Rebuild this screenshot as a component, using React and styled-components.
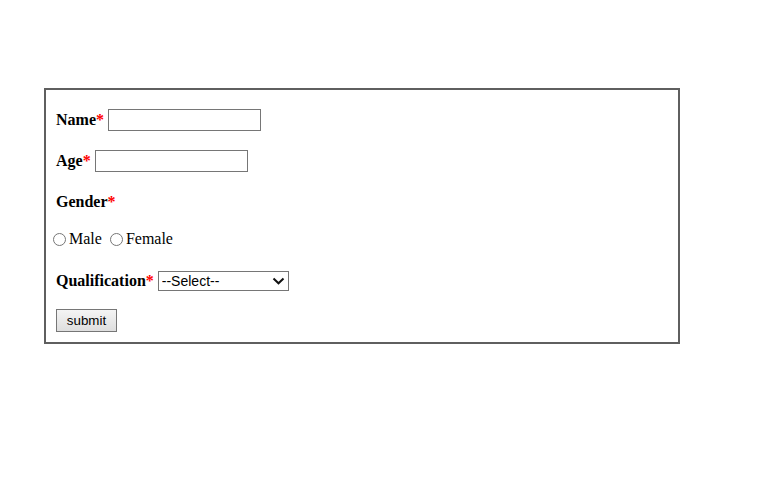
import styled, { createGlobalStyle } from "styled-components";

const Global = createGlobalStyle`
  body {
    margin: 8px;
    background: #fff;
    font-family: "Liberation Serif", "Times New Roman", serif;
    font-size: 16px;
    color: #000;
  }
`;

const Box = styled.form`
  margin: 80px 0 0 36px;
  width: 632px;
  border: 2px solid #5f5f5f;
  padding: 9px 0 7px;
`;

const Row = styled.div`
  display: flex;
  align-items: center;
  height: ${(p) => p.h}px;
  padding-left: ${(p) => (p.flush ? 0 : 10)}px;
`;

const Label = styled.label`
  font-weight: bold;
  margin-right: 4px;
`;

const Star = styled.span`
  color: #f00;
`;

const TextInput = styled.input`
  box-sizing: border-box;
  width: 153px;
  height: 22px;
  border: 1px solid #767676;
  padding: 1px 2px;
  font: 13.33px "Liberation Sans", Arial, sans-serif;
  outline: none;
`;

const Radio = styled.input`
  margin: 0 3px 0 7px;
  width: 13px;
  height: 13px;
`;

const RadioText = styled.span`
  margin-right: 1px;
`;

const SelectWrap = styled.span`
  position: relative;
  display: inline-flex;
`;

const Select = styled.select`
  appearance: none;
  box-sizing: border-box;
  width: 131px;
  height: 20px;
  border: 1px solid #767676;
  border-radius: 0;
  background: #fff;
  font: 14px "Liberation Sans", Arial, sans-serif;
  color: #000;
  padding: 0 18px 0 3px;
  outline: none;
`;

const Chevron = styled.svg`
  position: absolute;
  right: 4px;
  top: 6px;
  pointer-events: none;
`;

const Button = styled.button`
  box-sizing: border-box;
  width: 61px;
  height: 23px;
  border: 1px solid #767676;
  border-radius: 0;
  background: linear-gradient(#f4f4f4, #dedede);
  font: 13.33px "Liberation Sans", Arial, sans-serif;
  color: #000;
  padding: 0;
`;

function Field({ name, children }) {
  return (
    <>
      <Label>
        {name}
        <Star>*</Star>
      </Label>
      {children}
    </>
  );
}

export default function App() {
  return (
    <>
      <Global />
      <Box onSubmit={(e) => e.preventDefault()}>
        <Row h={42}>
          <Field name="Name">
            <TextInput type="text" />
          </Field>
        </Row>
        <Row h={40}>
          <Field name="Age">
            <TextInput type="text" />
          </Field>
        </Row>
        <Row h={42}>
          <Field name="Gender" />
        </Row>
        <Row h={32} flush>
          <Radio type="radio" name="gender" />
          <RadioText>Male</RadioText>
          <Radio type="radio" name="gender" />
          <RadioText>Female</RadioText>
        </Row>
        <Row h={51}>
          <Field name="Qualification">
            <SelectWrap>
              <Select defaultValue="">
                <option value="">--Select--</option>
                <option>Graduate</option>
                <option>Post Graduate</option>
              </Select>
              <Chevron width="13" height="8" viewBox="0 0 13 8">
                <path d="M1.5 1.5 L6.5 6.3 L11.5 1.5" fill="none" stroke="#111" strokeWidth="2" />
              </Chevron>
            </SelectWrap>
          </Field>
        </Row>
        <Row h={29}>
          <Button type="submit">submit</Button>
        </Row>
      </Box>
    </>
  );
}
